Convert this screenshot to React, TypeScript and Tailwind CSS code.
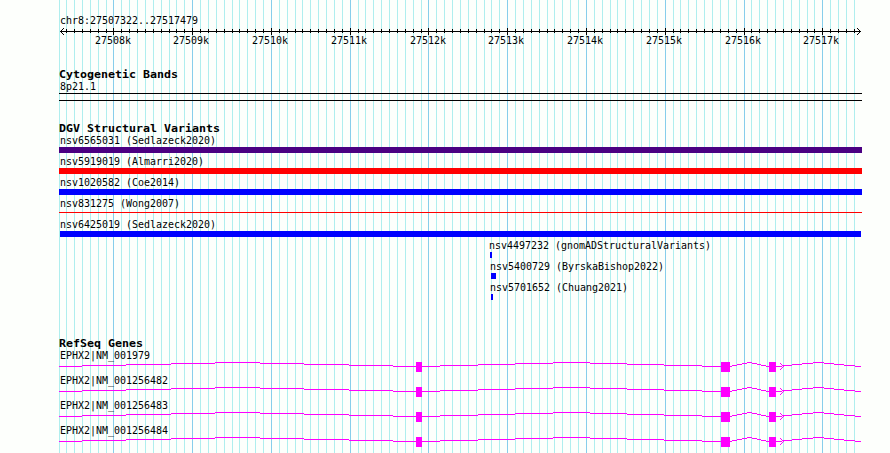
const REGION_START = 27507322;
const REGION_END = 27517479;
const PX_PER_BASE = 800 / (REGION_END - REGION_START);

const toX = (pos: number) => 60 + Math.round((pos - REGION_START) * PX_PER_BASE);

const gridLines = Array.from({ length: 102 }, (_, i) => {
  const pos = 27507300 + i * 100;
  return { pos, x: i === 0 ? 59 : toX(pos), major: pos % 1000 === 0 };
});

const ticks = gridLines.slice(1);
const majorTicks = ticks.filter((t) => t.major);

const variants = [
  { id: 'nsv6565031', study: 'Sedlazeck2020', x: 59, width: 803, fill: '#4b0082', thin: false },
  { id: 'nsv5919019', study: 'Almarri2020', x: 59, width: 803, fill: '#ff0000', thin: false },
  { id: 'nsv1020582', study: 'Coe2014', x: 59, width: 803, fill: '#0000ff', thin: false },
  { id: 'nsv831275', study: 'Wong2007', x: 59, width: 803, fill: '#ff0000', thin: true },
  { id: 'nsv6425019', study: 'Sedlazeck2020', x: 60, width: 801, fill: '#0000ff', thin: false },
  { id: 'nsv4497232', study: 'gnomADStructuralVariants', x: 490, width: 2, fill: '#0000ff', thin: false },
  { id: 'nsv5400729', study: 'ByrskaBishop2022', x: 491, width: 5, fill: '#0000ff', thin: false },
  { id: 'nsv5701652', study: 'Chuang2021', x: 491, width: 2, fill: '#0000ff', thin: false },
];

const genes = ['NM_001979', 'NM_001256482', 'NM_001256483', 'NM_001256484'];

const exons = [
  { x: 416, width: 6 },
  { x: 721, width: 9 },
  { x: 769, width: 7 },
];

// x boundaries of each intron hat; every step moves one pixel up, then back down
const introns = [
  [59, 82, 126, 171, 215, 260, 304, 349, 393, 416],
  [422, 440, 478, 515, 553, 590, 627, 664, 702, 721],
  [730, 732, 737, 742, 747, 752, 757, 761, 766, 769],
  [776, 782, 792, 802, 813, 824, 834, 844, 855, 861],
];
const hatHeights = [0, 1, 2, 3, 4, 3, 2, 1, 0];

function Label({ children }: { children: React.ReactNode }) {
  return (
    <span className="block w-max origin-left scale-x-[0.906] whitespace-pre pb-0.5 font-['DejaVu_Sans_Mono',monospace] text-[11px] leading-[11px]">
      {children}
    </span>
  );
}

function TrackTitle({ children }: { children: React.ReactNode }) {
  return (
    <h2 className="ml-[59px] w-max origin-left scale-x-[1.057] whitespace-pre font-['DejaVu_Sans_Mono',monospace] text-[11px] font-bold leading-[13px]">
      {children}
    </h2>
  );
}

function Grid() {
  return (
    <svg className="absolute inset-0" width="890" height="453" shapeRendering="crispEdges">
      {gridLines.map((line) => (
        <rect
          key={line.pos}
          x={line.x}
          y="0"
          width="1"
          height="453"
          fill={line.major ? '#87ceeb' : '#afeeee'}
        />
      ))}
    </svg>
  );
}

function Ruler() {
  return (
    <header className="h-[68px] pt-[15px]">
      <div className="pl-[60px]">
        <Label>chr8:27507322..27517479</Label>
      </div>
      <svg className="block" width="890" height="7" shapeRendering="crispEdges">
        <rect x="60" y="3" width="801" height="1" />
        {ticks.map((t) => (
          <rect key={t.pos} x={t.x} y={t.major ? 0 : 1} width="1" height={t.major ? 7 : 4} />
        ))}
        <path d="M61 2h1v1h-1zM62 1h1v1h-1zM63 0h1v1h-1zM61 4h1v1h-1zM62 5h1v1h-1zM63 6h1v1h-1z" />
        <path d="M859 2h1v1h-1zM858 1h1v1h-1zM857 0h1v1h-1zM859 4h1v1h-1zM858 5h1v1h-1zM857 6h1v1h-1z" />
      </svg>
      <div className="flex gap-[42.78px] pl-[94.5px]">
        {majorTicks.map((t) => (
          <div key={t.pos} className="w-9 shrink-0">
            <Label>{t.pos / 1000}k</Label>
          </div>
        ))}
      </div>
    </header>
  );
}

function Cytobands() {
  return (
    <section className="h-[54px]">
      <TrackTitle>Cytogenetic Bands</TrackTitle>
      <div className="pl-[60px]">
        <Label>8p21.1</Label>
      </div>
      <div className="-mt-px ml-[59px] h-2 w-[803px] border-y border-black" />
    </section>
  );
}

function StructuralVariants() {
  return (
    <section className="h-[215px]">
      <TrackTitle>DGV Structural Variants</TrackTitle>
      {variants.map((v) => (
        <div key={v.id} className="h-[21px]">
          <div style={{ paddingLeft: Math.max(60, v.x - 1) }}>
            <Label>
              {v.id} ({v.study})
            </Label>
          </div>
          <svg className="-mt-px block" width="890" height="6" shapeRendering="crispEdges">
            <rect x={v.x} y={v.thin ? 2 : 0} width={v.width} height={v.thin ? 1 : 6} fill={v.fill} />
          </svg>
        </div>
      ))}
    </section>
  );
}

function RefSeqGenes() {
  return (
    <section>
      <TrackTitle>RefSeq Genes</TrackTitle>
      {genes.map((gene) => (
        <div key={gene} className="h-[25px]">
          <div className="pl-[60px]">
            <Label>EPHX2|{gene}</Label>
          </div>
          <svg className="-mt-px block" width="890" height="12" fill="#ff00ff" shapeRendering="crispEdges">
            {introns.map((xs) =>
              hatHeights.map((h, i) => (
                <rect key={xs[i]} x={xs[i]} y={4 - h} width={xs[i + 1] - xs[i]} height="1" />
              )),
            )}
            {exons.map((e) => (
              <rect key={e.x} x={e.x} y="0" width={e.width} height="10" />
            ))}
            <path d="M780 1h1v1h-1zM781 2h1v1h-1zM782 3h1v1h-1zM783 4h1v1h-1zM782 5h1v1h-1zM781 6h1v1h-1zM780 7h1v1h-1z" />
          </svg>
        </div>
      ))}
    </section>
  );
}

export default function App() {
  return (
    <main className="relative h-[453px] w-[890px] overflow-hidden bg-[#fdfffc] text-black">
      <Grid />
      <div className="relative">
        <Ruler />
        <Cytobands />
        <StructuralVariants />
        <RefSeqGenes />
      </div>
    </main>
  );
}
